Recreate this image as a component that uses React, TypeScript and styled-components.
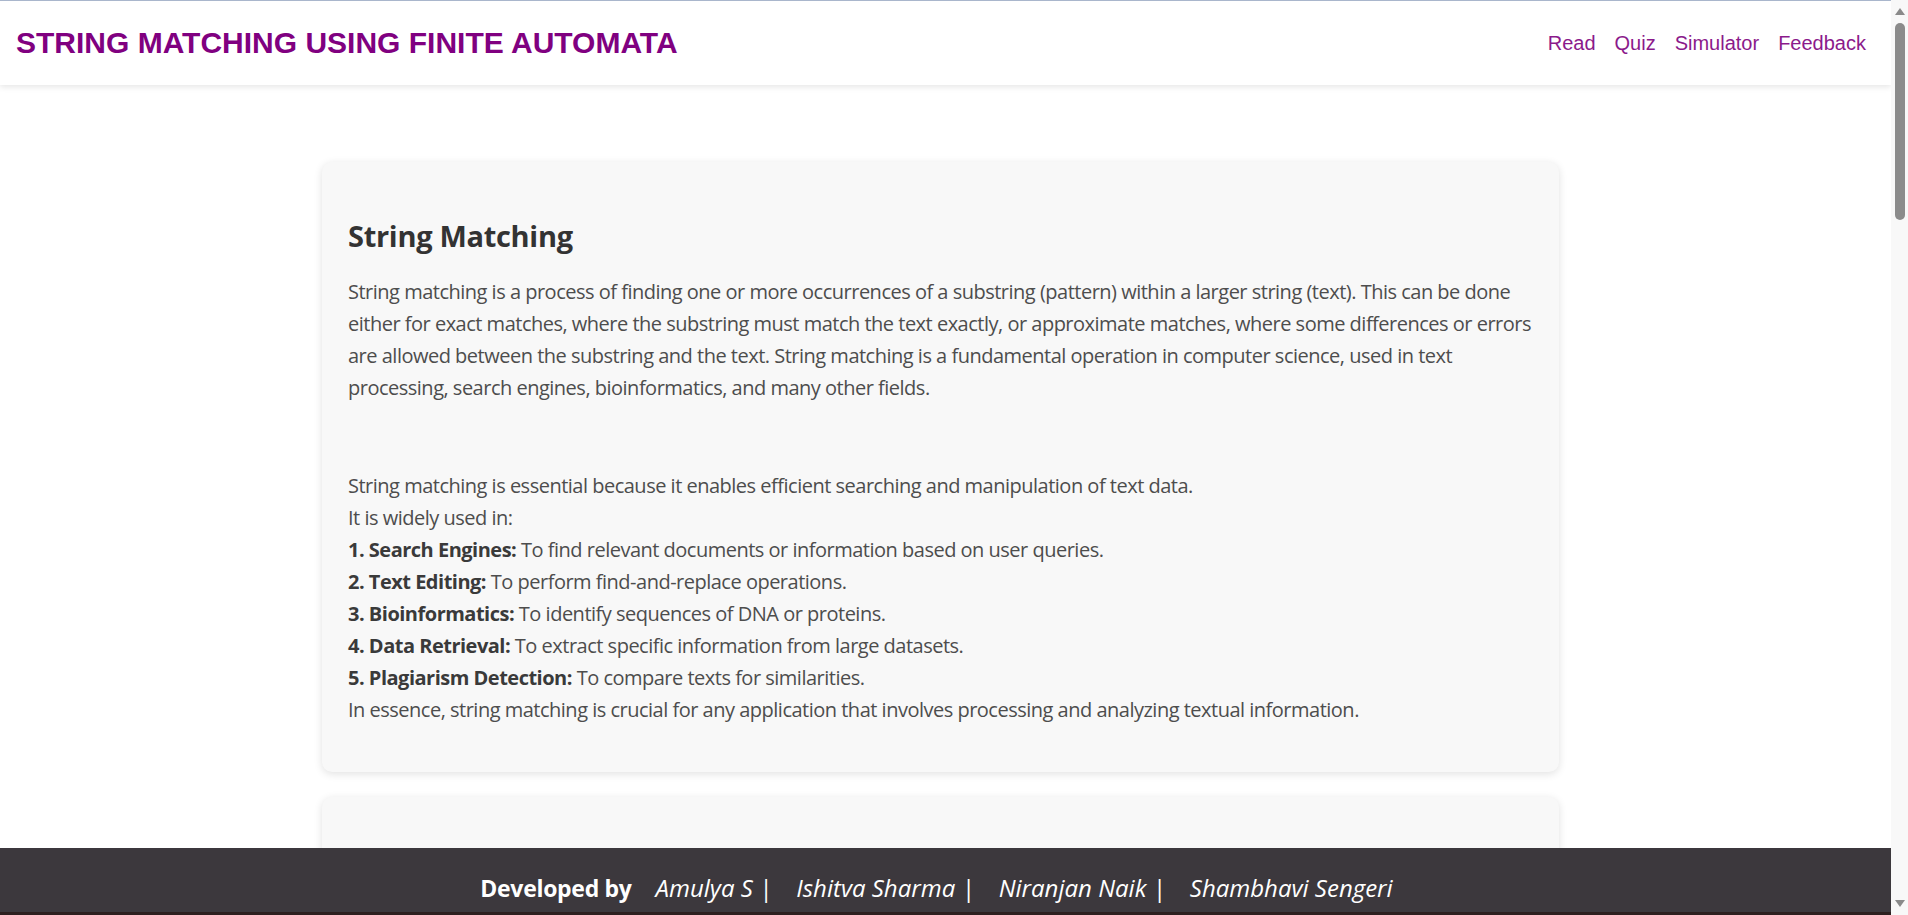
import React from "react";
import styled, { createGlobalStyle } from "styled-components";

const GlobalStyle = createGlobalStyle`
  html, body {
    margin: 0;
    padding: 0;
    background: #ffffff;
  }
  html { scrollbar-width: none; }
  html::-webkit-scrollbar { display: none; }
  body {
    font-family: "Open Sans", "Noto Sans", sans-serif;
    padding-right: 17px;
  }
  * { box-sizing: border-box; }
`;

const Header = styled.header`
  height: 85px;
  display: flex;
  align-items: center;
  justify-content: space-between;
  padding: 0 25px 0 16px;
  background: #ffffff;
  border-top: 1px solid #a9b6cc;
  box-shadow: 0 2px 6px rgba(0, 0, 0, 0.1);
  position: relative;
  z-index: 2;
`;

const Title = styled.h1`
  margin: 0;
  font-family: "Liberation Sans", Arial, sans-serif;
  font-weight: 700;
  font-size: 30px;
  letter-spacing: 0;
  color: #800080;
  text-transform: uppercase;
`;

const Nav = styled.nav`
  display: flex;
  align-items: center;
  gap: 19px;
`;

const NavLink = styled.a`
  font-family: "Liberation Sans", Arial, sans-serif;
  font-size: 20px;
  color: #8b1a8b;
  text-decoration: none;
  cursor: pointer;
`;

const Main = styled.main`
  display: flex;
  flex-direction: column;
  align-items: center;
  gap: 25px;
  padding: 77px 10px 110px 0;
`;

const Card = styled.section<{ $tall?: boolean }>`
  width: 1237px;
  background: #f8f8f8;
  border-radius: 10px;
  box-shadow: 0 2px 8px rgba(0, 0, 0, 0.12);
  padding: 26px;
  min-height: ${(p) => (p.$tall ? "3180px" : "auto")};
`;

const Heading = styled.h2`
  margin: 28px 0 20px;
  font-family: "Open Sans", "Noto Sans", sans-serif;
  font-weight: 700;
  font-size: 29px;
  line-height: 40px;
  letter-spacing: -0.3px;
  color: #333333;
`;

const Para = styled.p<{ $gap?: number }>`
  margin: ${(p) => (p.$gap ? `${p.$gap}px` : "0")} 0 20px;
  font-family: "Open Sans", "Noto Sans", sans-serif;
  font-size: 20px;
  line-height: 32px;
  letter-spacing: -0.5px;
  color: #4d4d4d;
`;

const Label = styled.strong`
  font-weight: 700;
  color: #3a3a3a;
`;

const Footer = styled.footer`
  position: fixed;
  left: 0;
  right: 17px;
  bottom: 0;
  height: 67px;
  background: #3c383d;
  border-bottom: 3px solid #2d1f1f;
  display: flex;
  justify-content: center;
  align-items: flex-start;
  gap: 24px;
  padding: 24px 18px 0 0;
  z-index: 3;
`;

const Credit = styled.span<{ $lead?: boolean }>`
  font-family: "Open Sans", "Noto Sans", sans-serif;
  font-size: ${(p) => (p.$lead ? "23px" : "24px")};
  line-height: 32px;
  color: #ffffff;
  font-weight: ${(p) => (p.$lead ? 700 : 400)};
  font-style: ${(p) => (p.$lead ? "normal" : "italic")};
  letter-spacing: ${(p) => (p.$lead ? "-0.3px" : "0")};
  white-space: nowrap;
`;

const ScrollTrack = styled.div`
  position: fixed;
  top: 0;
  right: 0;
  width: 17px;
  height: 100vh;
  background: #f8f8f8;
  display: flex;
  flex-direction: column;
  align-items: center;
  padding: 8px 0 8px;
  z-index: 5;
`;

const ScrollArrow = styled.div<{ $down?: boolean }>`
  width: 0;
  height: 0;
  border-left: 5px solid transparent;
  border-right: 5px solid transparent;
  ${(p) =>
    p.$down
      ? "border-top: 7px solid #8a8a8a; margin-top: auto;"
      : "border-bottom: 7px solid #8a8a8a;"}
`;

const ScrollThumb = styled.div`
  width: 10px;
  height: 197px;
  margin-top: 8px;
  border-radius: 5px;
  background: #8b8b8b;
`;

const uses: [string, string][] = [
  ["1. Search Engines:", " To find relevant documents or information based on user queries."],
  ["2. Text Editing:", " To perform find-and-replace operations."],
  ["3. Bioinformatics:", " To identify sequences of DNA or proteins."],
  ["4. Data Retrieval:", " To extract specific information from large datasets."],
  ["5. Plagiarism Detection:", " To compare texts for similarities."],
];

const developers = ["Amulya S |", "Ishitva Sharma |", "Niranjan Naik |", "Shambhavi Sengeri"];

export default function App() {
  return (
    <>
      <GlobalStyle />
      <Header>
        <Title>String Matching Using Finite Automata</Title>
        <Nav>
          <NavLink>Read</NavLink>
          <NavLink>Quiz</NavLink>
          <NavLink>Simulator</NavLink>
          <NavLink>Feedback</NavLink>
        </Nav>
      </Header>
      <Main>
        <Card>
          <Heading>String Matching</Heading>
          <Para>
            String matching is a process of finding one or more occurrences of a substring (pattern) within a
            larger string (text). This can be done either for exact matches, where the substring must match the
            text exactly, or approximate matches, where some differences or errors are allowed between the
            substring and the text. String matching is a fundamental operation in computer science, used in text
            processing, search engines, bioinformatics, and many other fields.
          </Para>
          <Para $gap={66}>
            String matching is essential because it enables efficient searching and manipulation of text data.
            <br />
            It is widely used in:
            <br />
            {uses.map(([label, text]) => (
              <React.Fragment key={label}>
                <Label>{label}</Label>
                {text}
                <br />
              </React.Fragment>
            ))}
            In essence, string matching is crucial for any application that involves processing and analyzing
            textual information.
          </Para>
        </Card>
        <Card $tall />
      </Main>
      <Footer>
        <Credit $lead>Developed by</Credit>
        {developers.map((d) => (
          <Credit key={d}>{d}</Credit>
        ))}
      </Footer>
      <ScrollTrack>
        <ScrollArrow />
        <ScrollThumb />
        <ScrollArrow $down />
      </ScrollTrack>
    </>
  );
}
